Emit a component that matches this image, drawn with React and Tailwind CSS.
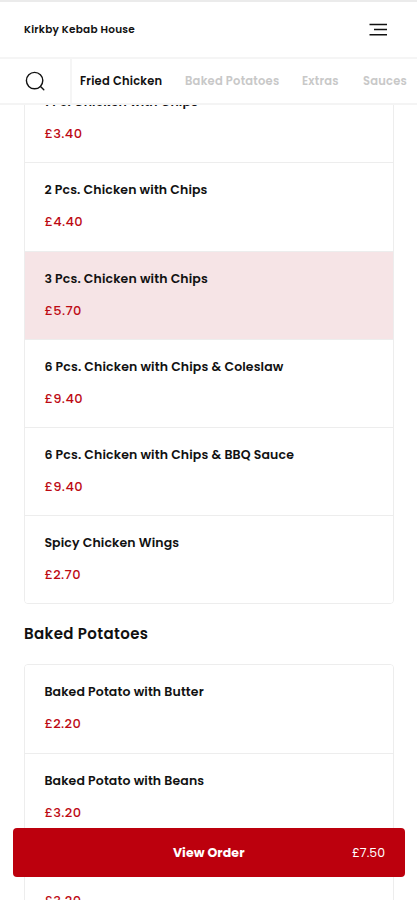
import React from 'react';

const chicken = [
  { name: '1 Pc. Chicken with Chips', price: '£3.40' },
  { name: '2 Pcs. Chicken with Chips', price: '£4.40' },
  { name: '3 Pcs. Chicken with Chips', price: '£5.70', active: true },
  { name: '6 Pcs. Chicken with Chips & Coleslaw', price: '£9.40' },
  { name: '6 Pcs. Chicken with Chips & BBQ Sauce', price: '£9.40' },
  { name: 'Spicy Chicken Wings', price: '£2.70' },
];

const potatoes = [
  { name: 'Baked Potato with Butter', price: '£2.20' },
  { name: 'Baked Potato with Beans', price: '£3.20' },
  { name: 'Baked Potato with Cheese', price: '£3.20' },
];

function MenuList({ items }) {
  return (
    <ul className="mr-[23px] ml-6 overflow-hidden rounded-[4px] border border-[#ededed]">
      {items.map((item) => (
        <li
          key={item.name}
          className={`flex h-[88.3px] flex-col border-b border-[#ededed] pt-[18px] pl-[19.4px] last:h-[87px] last:border-b-0 ${item.active ? 'bg-[#f6e4e6]' : 'bg-white'}`}
        >
          <span className="text-[12.5px] leading-[18px] font-semibold tracking-[0.12px] whitespace-nowrap">{item.name}</span>
          <span className="mt-3.5 text-[13px] leading-[18px] font-medium tracking-[0.4px] text-[#bd0a14]">{item.price}</span>
        </li>
      ))}
    </ul>
  );
}

export default function App() {
  return (
    <div className="relative flex h-[900px] w-[417px] flex-col overflow-hidden bg-white font-['Poppins','Inter',sans-serif] text-[#111]">
      <header className="flex h-[59px] shrink-0 items-center justify-between border-t-2 border-b-2 border-t-[#ebebeb] border-b-[#f5f5f5] pr-[30px] pl-6">
        <h1 className="text-[10.5px] font-semibold tracking-[0.23px] whitespace-nowrap">Kirkby Kebab House</h1>
        <svg width="18" height="14" viewBox="0 0 18 14" stroke="#111" strokeWidth="1.6" fill="none">
          <path d="M0.5 1.5H18M5 6.5H18M0.5 11.8H18" />
        </svg>
      </header>
      <nav className="flex h-[46px] shrink-0 items-center border-b-2 border-[#f4f4f4] text-[11.5px] font-semibold tracking-[0.22px] whitespace-nowrap text-[#c8c8c8]">
        <div className="flex h-full w-[72px] shrink-0 items-center border-r-2 border-[#f5f5f5] pl-[25px]">
          <svg width="21" height="21" viewBox="0 0 21 21" fill="none" stroke="#111" strokeWidth="1.4" strokeLinecap="round">
            <circle cx="9.6" cy="9.6" r="8.2" />
            <path d="M15.5 15.5L18.8 18.8" />
          </svg>
        </div>
        <span className="w-[105px] shrink-0 pt-px pl-2 text-[#111]">Fried Chicken</span>
        <span className="w-[117px] shrink-0 pt-px pl-2">Baked Potatoes</span>
        <span className="w-[61px] shrink-0 pt-px pl-2">Extras</span>
        <span className="shrink-0 pt-px pl-2">Sauces</span>
      </nav>
      <main className="min-h-0 flex-1 overflow-hidden">
        <div className="-mt-[31px]">
          <MenuList items={chicken} />
          <h2 className="mt-[17px] mb-[18px] ml-6 text-[15px] leading-[25px] font-semibold tracking-[0.38px]">Baked Potatoes</h2>
          <MenuList items={potatoes} />
        </div>
      </main>
      <button className="absolute top-[828px] left-[12.5px] grid h-[49px] w-[392.5px] grid-cols-[1fr_auto_1fr] items-center rounded-[4px] bg-[#bc000d] text-white">
        <span />
        <span className="pt-px text-[12.5px] font-bold tracking-[0.1px]">View Order</span>
        <span className="pt-0.5 pr-5 text-right text-[12.5px]">£7.50</span>
      </button>
    </div>
  );
}
